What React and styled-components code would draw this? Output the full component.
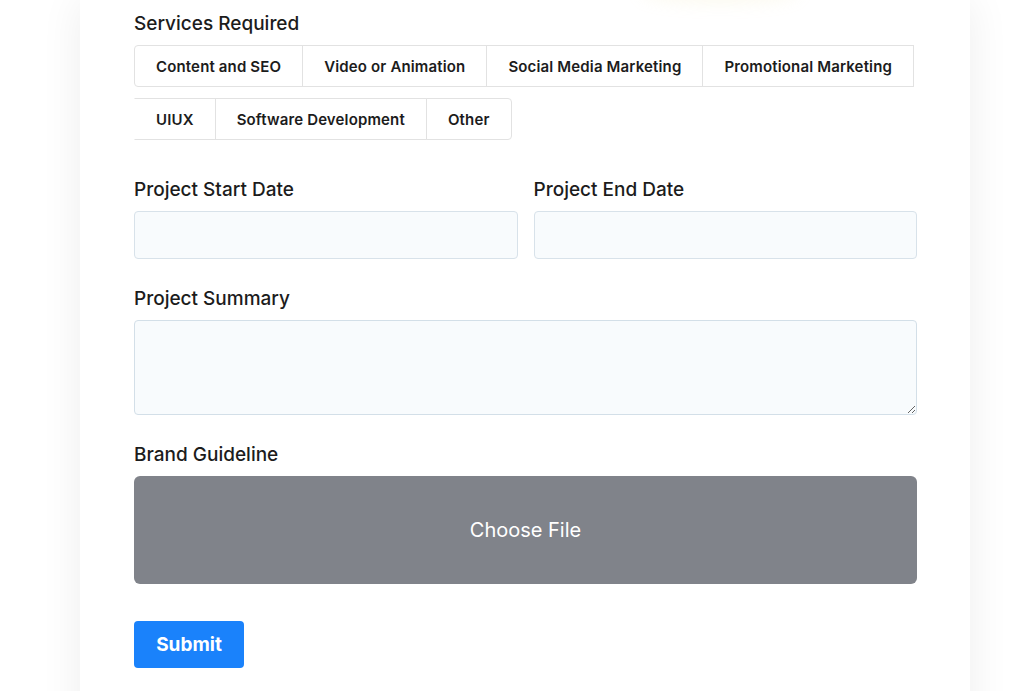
import styled, { createGlobalStyle } from 'styled-components';

const GlobalStyle = createGlobalStyle`
  html, body {
    margin: 0;
    padding: 0;
    background: #ffffff;
    font-family: "Inter", "Liberation Sans", sans-serif;
    color: #1c1c1c;
  }
`;

const serviceRows = [
  ['Content and SEO', 'Video or Animation', 'Social Media Marketing', 'Promotional Marketing'],
  ['UIUX', 'Software Development', 'Other'],
];

const App = () => {
  return (
    <Page>
      <GlobalStyle />
      <Card>
        <Glow />
        <Field $spacing={39}>
          <Label>Services Required</Label>
          <ChipGroup>
            {serviceRows.map((row, r) => (
              <ChipRow key={r}>
                {row.map((s, i) => (
                  <Chip
                    key={s}
                    $first={r === 0 && i === 0}
                    $last={r === serviceRows.length - 1 && i === row.length - 1}
                    $wrapStart={r > 0 && i === 0}
                  >
                    {s}
                  </Chip>
                ))}
              </ChipRow>
            ))}
          </ChipGroup>
        </Field>

        <DateRow>
          <Field $grow>
            <Label>Project Start Date</Label>
            <Input type="text" />
          </Field>
          <Field $grow>
            <Label>Project End Date</Label>
            <Input type="text" />
          </Field>
        </DateRow>

        <Field>
          <Label>Project Summary</Label>
          <TextArea />
        </Field>

        <Field>
          <Label>Brand Guideline</Label>
          <FileBox>Choose File</FileBox>
        </Field>

        <SubmitButton>Submit</SubmitButton>
      </Card>
    </Page>
  );
};

const Page = styled.div`
  width: 1024px;
  height: 691px;
  overflow: hidden;
  display: flex;
  justify-content: flex-start;
  padding-left: 80px;
  box-sizing: border-box;
`;

const Card = styled.div`
  position: relative;
  width: 890px;
  min-height: 760px;
  background: #ffffff;
  box-shadow: 0 0 40px rgba(0, 0, 0, 0.07);
  padding: 13px 53px 0 54px;
  box-sizing: border-box;
  display: flex;
  flex-direction: column;
`;

const Glow = styled.div`
  position: absolute;
  top: -24px;
  left: 560px;
  width: 160px;
  height: 24px;
  border-radius: 50%;
  box-shadow: 0 4px 16px rgba(240, 230, 170, 0.18);
`;

const Field = styled.div`
  display: flex;
  flex-direction: column;
  flex: ${(p) => (p.$grow ? '1' : 'none')};
  margin-bottom: ${(p) => (p.$spacing ?? 29)}px;
`;

const Label = styled.label`
  font-size: 19px;
  font-weight: 500;
  line-height: 22px;
  color: #1c1c1c;
  margin-bottom: 10px;
`;

const ChipGroup = styled.div`
  display: flex;
  flex-direction: column;
  gap: 11px;
`;

const ChipRow = styled.div`
  display: flex;
`;

const Chip = styled.button`
  flex-shrink: 0;
  white-space: nowrap;
  height: 42px;
  padding: 0 21px;
  margin-left: ${(p) => (p.$first || p.$wrapStart ? '0' : '-1px')};
  background: #ffffff;
  border: 1px solid #e2e2e2;
  border-left-color: ${(p) => (p.$wrapStart ? 'transparent' : '#e2e2e2')};
  border-radius: ${(p) => (p.$first ? '4px 0 0 4px' : p.$last ? '0 4px 4px 0' : '0')};
  font-family: "Inter", "Liberation Sans", sans-serif;
  font-size: 15px;
  font-weight: 600;
  letter-spacing: 0.15px;
  color: #1c1c1c;
  cursor: pointer;
`;

const DateRow = styled.div`
  display: flex;
  gap: 16px;
`;

const Input = styled.input`
  height: 48px;
  box-sizing: border-box;
  border: 1px solid #d8e2ea;
  border-radius: 4px;
  background: #f8fbfd;
  outline: none;
`;

const TextArea = styled.textarea`
  height: 95px;
  box-sizing: border-box;
  border: 1px solid #d3dfe8;
  border-radius: 4px;
  background: #f8fbfd;
  outline: none;
  resize: vertical;
`;

const FileBox = styled.div`
  height: 108px;
  border-radius: 6px;
  background: #80838a;
  color: #ffffff;
  font-size: 20px;
  display: flex;
  align-items: center;
  justify-content: center;
`;

const SubmitButton = styled.button`
  align-self: flex-start;
  width: 110px;
  height: 47px;
  margin-top: 8px;
  border: none;
  border-radius: 4px;
  background: #1a82fb;
  color: #ffffff;
  font-family: "Inter", "Liberation Sans", sans-serif;
  font-size: 19px;
  font-weight: 700;
  cursor: pointer;
`;

export default App;
